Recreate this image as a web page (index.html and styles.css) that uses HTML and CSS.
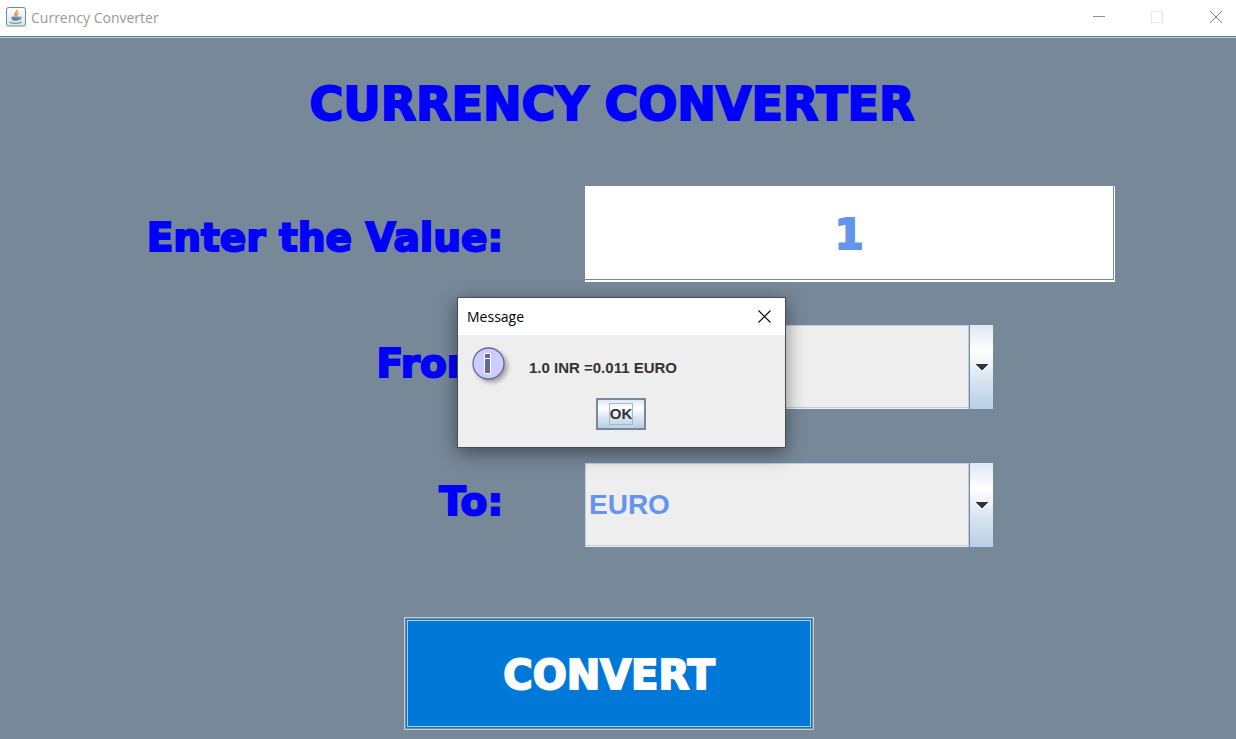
FILE: index.html
```html
<!DOCTYPE html>
<html lang="en">
<head>
<meta charset="utf-8">
<title>Currency Converter</title>
<link rel="stylesheet" href="styles.css">
</head>
<body>
<div class="window">
  <header class="titlebar">
    <svg class="app-icon" width="20" height="20" viewBox="0 0 20 20" aria-hidden="true">
      <defs><linearGradient id="tile" x2="0" y2="1"><stop offset="0" stop-color="#fff"/><stop offset="1" stop-color="#dfe4e9"/></linearGradient></defs>
      <rect x=".5" y=".5" width="19" height="18.5" rx="2" fill="url(#tile)" stroke="#6f8796"/>
      <path d="M10.8 3c1 2.300-3.600 3.500-1.500 6.600M12.500 5.800c-2.500 1.300-1 2.200-2 3.700" fill="none" stroke="#ee8a3a" stroke-width="1.500"/>
      <path d="M5.500 9.800h8v1.500c0 2-1.500 2.700-4 2.700s-4-.7-4-2.700z" fill="#6688a3"/>
      <path d="M13.500 10c2.200-.3 2 2.200-.8 2.600M3.800 14.800c1 2 10.500 2 11.800-.1" fill="none" stroke="#7594ab" stroke-width="1.300"/>
    </svg>
    <span class="window-title">Currency Converter</span>
    <div class="controls">
      <button class="control" aria-label="Minimize"><svg width="12" height="12" viewBox="0 0 12 12"><path d="M0 5.500h12" stroke="#909090"/></svg></button>
      <button class="control" aria-label="Maximize" disabled><svg width="12" height="12" viewBox="0 0 12 12"><rect x=".5" y=".5" width="11" height="11" fill="none" stroke="#e6e6e6"/></svg></button>
      <button class="control" aria-label="Close"><svg width="12" height="12" viewBox="0 0 12 12"><path d="M0 0l12 12M12 0L0 12" stroke="#808080"/></svg></button>
    </div>
  </header>
  <main class="content">
    <h1 class="heading">CURRENCY CONVERTER</h1>
    <form class="form">
      <label class="label label-amount" for="amount">Enter the Value:</label>
      <div class="amount-frame"><input class="amount" id="amount" type="text" value="1"></div>
      <label class="label label-from" for="from">From:</label>
      <select class="combo combo-from" id="from"><option>INR</option><option>EURO</option></select>
      <label class="label label-to" for="to">To:</label>
      <select class="combo combo-to" id="to"><option>EURO</option><option>INR</option></select>
      <button class="convert" type="button"><span class="convert-face">CONVERT</span></button>
    </form>
  </main>
  <section class="dialog" role="dialog" aria-labelledby="dialog-title">
    <header class="dialog-bar">
      <span id="dialog-title">Message</span>
      <button class="dialog-close" aria-label="Close"><svg width="13" height="13" viewBox="0 0 13 13"><path d="M.5.5l12 12M12.500.5l-12 12" stroke="#000" stroke-width="1.100"/></svg></button>
    </header>
    <div class="dialog-message">
      <svg class="info" width="38" height="38" viewBox="0 0 38 38" aria-hidden="true">
        <circle cx="16.500" cy="16.500" r="15.500" fill="#ccf" stroke="#66669b" stroke-width="1.300"/>
        <path d="M12.500 6.500h6v5h-6zM12.500 11.500h6v15h-6z" fill="#66669b" stroke="#fff"/>
      </svg>
      <p class="dialog-text">1.0 INR =0.011 EURO</p>
    </div>
    <button class="ok"><span class="ok-focus">OK</span></button>
  </section>
</div>
</body>
</html>
```
FILE: styles.css
```css
* { box-sizing: border-box; }
body { margin: 0; background: #778899; font-family: "Liberation Sans", Arial, sans-serif; }
button { margin: 0; padding: 0; border: 0; background: none; }
svg { display: block; }

.window { position: relative; min-height: 100vh; overflow: hidden; }
.titlebar {
  display: flex; align-items: center; height: 38px; padding: 0 0 3px 6px;
  background: #fff; border-bottom: 1px solid #b8cfe5; box-shadow: inset 0 -1px #6a7f92;
}
.window-title { margin-left: 5px; font: 14px "Open Sans", sans-serif; color: #999; }
.controls { display: flex; margin-left: auto; }
.control { display: grid; place-items: center; width: 58px; height: 34px; }
.control:last-child { width: 40px; margin-left: 10px; }

.heading, .label, .amount, .convert-face {
  font-family: "Arial Black", "DejaVu Sans", sans-serif; font-weight: 900;
  -webkit-text-stroke: 2px currentColor;
}
.heading {
  margin: 0; padding: 36px 12px 0 0; text-align: center; color: #00f;
  font-size: 46px; line-height: 60px;
}
.form {
  display: grid; grid-template-columns: 503fr 530fr; column-gap: 82px;
  padding: 52px 121px 8px 0; align-items: center;
}
.label { text-align: right; color: #00f; font-size: 39px; line-height: 48px; }
.label-amount { padding-top: 8px; }
.label-from, .label-to { padding-bottom: 6px; }
.label-from, .combo-from { margin-top: 43px; }
.label-to, .combo-to { margin-top: 54px; }
.amount-frame { height: 96px; border: solid #fff; border-width: 0 1px 2px 0; }
.amount {
  display: block; width: 100%; height: 100%; padding: 4px 0 0; border: solid #778899;
  border-width: 0 1px 1px 0; border-radius: 0; outline: 0; background: #fff;
  color: #6495ed; text-align: center; font-size: 42px;
}
.combo {
  appearance: none; width: 408px; height: 84px; padding: 0 30px 2px 4px;
  border: 0; border-radius: 0; color: #6495ed;
  font: bold 28px "Liberation Sans", Arial, sans-serif;
  background:
    conic-gradient(from -45deg at 50% 100%, #333 90deg, transparent 0) right 5px top 39px / 12px 6px no-repeat,
    linear-gradient(#dde8f3, #fff 30%, #dde8f3 60%, #b8cfe5) right / 23px 100% no-repeat,
    linear-gradient(#778899, #778899) right 23px top / 1px 100% no-repeat,
    linear-gradient(#b8cfe5, #b8cfe5) right 24px top / 1px 100% no-repeat,
    linear-gradient(#b8cfe5, #b8cfe5) left / 1px 100% no-repeat,
    linear-gradient(#b8cfe5, #b8cfe5) top / 100% 1px no-repeat,
    linear-gradient(#b8cfe5, #b8cfe5) left bottom 1px / 100% 1px no-repeat,
    #eee;
}
.convert {
  grid-column: 1 / -1; width: 410px; height: 113px; margin: 70px 0 0 404px; padding: 2px;
  border: 1px solid #b8cfe5;
}
.convert-face {
  display: grid; place-items: center; height: 100%; padding-top: 2px; border: 1px solid #b8cfe5;
  outline: 1px solid #0078d7; background: #0078d7; color: #fff; font-size: 40px;
}

.dialog {
  position: absolute; left: calc(50% - 161px); top: 297px; width: 329px; padding-bottom: 17px;
  border: 1px solid #444c55; background: #eee; box-shadow: 0 5px 18px rgba(0, 0, 0, .45);
}
.dialog-bar {
  display: flex; align-items: center; justify-content: space-between; height: 37px;
  padding: 0 14px 0 9px; background: #fff; font: 14px "Open Sans", sans-serif; color: #000;
}
.dialog-message { display: flex; align-items: flex-start; height: 63px; padding: 12px 0 0 14px; }
.info { filter: drop-shadow(3px 3px 2px rgba(0, 0, 0, .3)); }
.dialog-text { margin: 0 0 0 19px; padding-top: 11px; font: bold 15px/20px "Liberation Sans", Arial, sans-serif; color: #333; }
.ok {
  display: grid; place-items: center; width: 50px; height: 32px; margin: 0 auto 0 138px;
  border: 2px solid #778899; background: linear-gradient(#dde8f3, #fff 30%, #dde8f3 60%, #b8cfe5);
  font: bold 15px/20px "Liberation Sans", Arial, sans-serif; color: #333;
}
.ok-focus { border: 1px solid #a3b8cc; }
```
